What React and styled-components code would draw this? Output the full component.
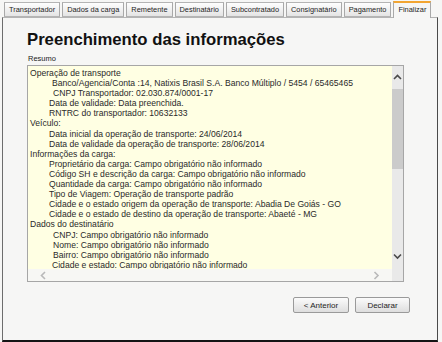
import React from 'react';
import styled, { createGlobalStyle } from 'styled-components';

const GlobalStyle = createGlobalStyle`
  html, body {
    margin: 0;
    padding: 0;
    background: #f6f6f5;
  }
  body {
    font-family: "Liberation Sans", Arial, sans-serif;
  }
`;

const Window = styled.div`
  width: 442px;
  height: 342px;
  box-sizing: border-box;
  padding: 1px 4px 0 2px;
  display: flex;
  flex-direction: column;
  background: #f6f6f5;
`;

const TabBar = styled.div`
  display: flex;
  align-items: flex-end;
  gap: 2px;
  padding-left: 2px;
  height: 16px;
  position: relative;
  z-index: 1;
`;

const Tab = styled.div`
  box-sizing: border-box;
  height: ${(p) => (p.$active ? '17px' : '15px')};
  margin-bottom: ${(p) => (p.$active ? '-1px' : '0')};
  padding: 0 4px;
  border: 1px solid #a9a9a9;
  border-top: ${(p) => (p.$active ? '2px solid #f2a531' : '1px solid #b4b4b4')};
  border-bottom: ${(p) => (p.$active ? 'none' : '1px solid #b4b4b4')};
  background: ${(p) =>
    p.$active ? '#f6f6f5' : 'linear-gradient(#fefefe, #e4e4e4)'};
  font-size: 7.4px;
  line-height: 13px;
  color: #1e1e1e;
  white-space: nowrap;
`;

const Panel = styled.div`
  flex: 1;
  display: flex;
  flex-direction: column;
  border-top: 1px solid #b4b4b4;
  border-left: 1px solid #6d6d6d;
  border-right: 1px solid #4a4a4a;
  border-bottom: 2px solid #141414;
  padding: 12px 0 0 24px;
  background: #f6f6f5;
`;

const Title = styled.h1`
  margin: 0;
  font-size: 16.7px;
  line-height: 20px;
  font-weight: bold;
  color: #111;
`;

const Label = styled.div`
  margin-top: 4px;
  padding-left: 1px;
  font-size: 7.5px;
  line-height: 9px;
  color: #222;
`;

const SummaryBox = styled.div`
  margin-top: 2px;
  width: 377px;
  height: 217px;
  box-sizing: border-box;
  border: 1px solid #a6a6a6;
  background: #ffffe3;
  display: grid;
  grid-template-columns: 1fr 11px;
  grid-template-rows: 1fr 12px;
`;

const Content = styled.div`
  overflow: hidden;
  padding: 2px 0 0 2px;
  font-size: 8.6px;
  line-height: 10.1px;
  color: #2a2a2a;
  white-space: nowrap;
`;

const Line = styled.div`
  padding-left: ${(p) => p.$indent || 0}px;
`;

const VScroll = styled.div`
  display: flex;
  flex-direction: column;
  background: #e9e9e9;
`;

const ArrowButton = styled.div`
  height: ${(p) => p.$h}px;
  display: flex;
  align-items: center;
  justify-content: center;
`;

const Thumb = styled.div`
  height: 80px;
  background: #cbcbcb;
`;

const Track = styled.div`
  flex: 1;
`;

const HScroll = styled.div`
  display: flex;
  align-items: center;
  justify-content: space-between;
  padding: 0 12px 0 12px;
  background: #f7f7f4;
`;

const Corner = styled.div`
  background: #e9e9e9;
`;

const Actions = styled.div`
  display: flex;
  justify-content: flex-end;
  gap: 6px;
  margin-top: 15px;
  padding-right: 27px;
`;

const Button = styled.button`
  box-sizing: border-box;
  width: ${(p) => p.$w}px;
  height: 16px;
  padding: 0;
  border: 1px solid #9a9a9a;
  border-radius: 2px;
  background: linear-gradient(#fbfbfb, #dedede);
  font-family: "Liberation Sans", Arial, sans-serif;
  font-size: 8px;
  color: #1e1e1e;
`;

const Chevron = ({ dir, color = '#4a4a4a' }) => {
  const paths = {
    up: 'M1 5 L4.5 1.5 L8 5',
    down: 'M1 1.5 L4.5 5 L8 1.5',
    left: 'M5 1 L1.5 4.5 L5 8',
    right: 'M1.5 1 L5 4.5 L1.5 8',
  };
  const vertical = dir === 'up' || dir === 'down';
  return (
    <svg
      width={vertical ? 9 : 7}
      height={vertical ? 7 : 9}
      viewBox={vertical ? '0 0 9 7' : '0 0 7 9'}
    >
      <path d={paths[dir]} fill="none" stroke={color} strokeWidth="1.6" />
    </svg>
  );
};

const tabs = [
  'Transportador',
  'Dados da carga',
  'Remetente',
  'Destinatário',
  'Subcontratado',
  'Consignatário',
  'Pagamento',
  'Finalizar',
];

const lines = [
  [0, 'Operação de transporte'],
  [22, 'Banco/Agencia/Conta :14, Natixis Brasil S.A. Banco Múltiplo / 5454 / 65465465'],
  [23, 'CNPJ Transportador:  02.030.874/0001-17'],
  [19, 'Data de validade: Data preenchida.'],
  [19, 'RNTRC do transportador:  10632133'],
  [0, 'Veículo:'],
  [19, 'Data inicial da operação de transporte:  24/06/2014'],
  [19, 'Data de validade da operação de transporte:  28/06/2014'],
  [0, 'Informações da carga:'],
  [19, 'Proprietário da carga:  Campo obrigatório não informado'],
  [19, 'Código SH e descrição da carga:  Campo obrigatório não informado'],
  [19, 'Quantidade da carga:  Campo obrigatório não informado'],
  [19, 'Tipo de Viagem: Operação de transporte padrão'],
  [19, 'Cidade e o estado origem da operação de transporte: Abadia De Goiás - GO'],
  [19, 'Cidade e o estado de destino da operação de transporte: Abaeté - MG'],
  [0, 'Dados do  destinatário'],
  [23, 'CNPJ: Campo obrigatório não informado'],
  [23, 'Nome: Campo obrigatório não informado'],
  [23, 'Bairro: Campo obrigatório não informado'],
  [22, 'Cidade e estado:  Campo obrigatório não informado'],
  [22, 'Endereço: Campo obrigatório não informado'],
];

export default function App() {
  return (
    <>
      <GlobalStyle />
      <Window>
        <TabBar>
          {tabs.map((t) => (
            <Tab key={t} $active={t === 'Finalizar'}>
              {t}
            </Tab>
          ))}
        </TabBar>
        <Panel>
          <Title>Preenchimento das informações</Title>
          <Label>Resumo</Label>
          <SummaryBox>
            <Content>
              {lines.map(([indent, text], i) => (
                <Line key={i} $indent={indent}>
                  {text}
                </Line>
              ))}
            </Content>
            <VScroll>
              <ArrowButton $h={23}>
                <Chevron dir="up" />
              </ArrowButton>
              <Thumb />
              <Track />
              <ArrowButton $h={26}>
                <Chevron dir="down" />
              </ArrowButton>
            </VScroll>
            <HScroll>
              <Chevron dir="left" color="#b9b9b9" />
              <Chevron dir="right" color="#b9b9b9" />
            </HScroll>
            <Corner />
          </SummaryBox>
          <Actions>
            <Button $w={56}>&lt; Anterior</Button>
            <Button $w={55}>Declarar</Button>
          </Actions>
        </Panel>
      </Window>
    </>
  );
}
